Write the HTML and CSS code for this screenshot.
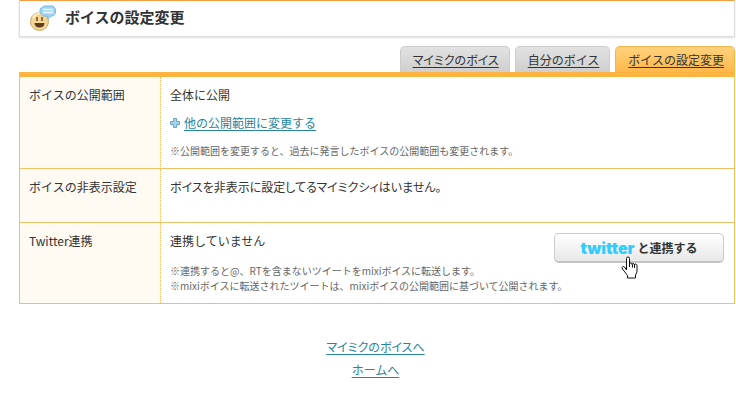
FILE: index.html
```html
<!DOCTYPE html>
<html lang="ja">
<head>
    <meta charset="UTF-8">
    <meta name="viewport" content="width=device-width, initial-scale=1.0">
    <title>ボイスの設定変更</title>
    <link rel="stylesheet" href="styles.css">
</head>
<body>
    <!-- Page heading -->
    <header class="page-header">
        <svg class="voice-icon" width="26" height="27" viewBox="0 0 26 27" aria-hidden="true">
            <circle cx="9.500" cy="16.500" r="9" fill="#f3d594" stroke="#c9a66b"/>
            <path d="M3 13c2-4 5-5 8-5" fill="none" stroke="#fdf0c4" stroke-width="2"/>
            <path d="M7 12v4M12 12v4" stroke="#6b4a26" stroke-width="1.500"/>
            <path d="M4.500 18h10c0 3-2 4.500-5 4.500s-5-1.500-5-4.500z" fill="#5c3d1c"/>
            <path d="M14 1h9l2.500 3v4L23 11h-2l-3 3-1-3h-4L10 8V4z" fill="#9fd4f7" stroke="#7dbce8"/>
            <path d="M13 4.500h10M13 7.500h10" stroke="#eefaff" stroke-width="1.500"/>
        </svg>
        <h1>ボイスの設定変更</h1>
    </header>

    <!-- Tabs -->
    <nav class="tabs">
        <a href="#voice" class="tab kana">マイミクのボイス</a>
        <a href="#mine" class="tab">自分のボイス</a>
        <a href="#settings" class="tab tab-active">ボイスの設定変更</a>
    </nav>

    <!-- Settings -->
    <main>
        <table class="settings">
            <tr>
                <th scope="row">ボイスの公開範囲</th>
                <td>
                    <p>全体に公開</p>
                    <p class="change">
                        <svg width="10" height="10" viewBox="0 0 10 10" aria-hidden="true">
                            <path d="M3.500 .5h3v3h3v3h-3v3h-3v-3h-3v-3h3z" fill="#a5d3ea" stroke="#6ba6c2"/>
                        </svg>
                        <a href="#range">他の公開範囲に変更する</a>
                    </p>
                    <p class="note">※公開範囲を変更すると、過去に発言したボイスの公開範囲も変更されます。</p>
                </td>
            </tr>
            <tr class="row-hidden">
                <th scope="row">ボイスの非表示設定</th>
                <td>
                    <p class="kana">ボイスを非表示に設定してるマイミクシィはいません。</p>
                </td>
            </tr>
            <tr>
                <th scope="row">Twitter連携</th>
                <td>
                    <div class="connect">
                        <p>連携していません</p>
                        <button type="button" class="twitter-btn">
                            <span class="twitter-logo">twitter</span>と連携する
                            <svg class="pointer" width="18" height="23" viewBox="0 0 18 23" aria-hidden="true">
                                <path d="M5.500 14V2.500q0-1.500 1.500-1.500t1.500 1.500V8q0-1 1.200-1t1.300 1.500q0-1 1.200-1t1.300 1.500q0-1 1.200-1t1.300 1.500V15q0 2-1.500 4v3h-8v-2.500L1.500 13q-1-1.500 0-2.200t2 .2z" fill="#fff" stroke="#111"/>
                                <path d="M8.500 8v3M11.500 8.500v3M13.500 9v3" stroke="#111"/>
                            </svg>
                        </button>
                    </div>
                    <p class="note">※連携すると@、RTを含まないツイートをmixiボイスに転送します。<br>※mixiボイスに転送されたツイートは、mixiボイスの公開範囲に基づいて公開されます。</p>
                </td>
            </tr>
        </table>
    </main>

    <!-- Footer links -->
    <footer class="footer-links">
        <a href="#voice" class="kana">マイミクのボイスへ</a>
        <a href="#home">ホームへ</a>
    </footer>
</body>
</html>
```
FILE: styles.css
```css
/* Reset and base styles */
* {
    margin: 0;
    padding: 0;
    box-sizing: border-box;
}

body {
    padding: 0 1px 0 19px;
    background-color: #fff;
    color: #333;
    font-family: "Noto Sans CJK JP", sans-serif;
    font-size: 12px;
    line-height: 18px;
}

a {
    color: #2585a0;
    text-underline-offset: 2px;
}

/* Proportional kana for long kana runs */
.kana {
    font-feature-settings: "palt";
}

/* Page heading */
.page-header {
    display: flex;
    align-items: center;
    gap: 9px;
    height: 37px;
    padding: 0 10px 1px;
    border: 1px solid #ddd;
    border-top: 1px solid #f0a040;
    box-shadow: 0 1px 2px #ddd;
}

.page-header h1 {
    font-size: 15px;
    line-height: 20px;
    padding-bottom: 3px;
}

/* Tabs */
.tabs {
    display: flex;
    justify-content: flex-end;
    gap: 5px;
    margin-top: 9px;
}

.tab {
    height: 26px;
    padding: 4px 10px 0 12px;
    border: 1px solid #ccc;
    border-bottom: 0;
    border-radius: 5px 5px 0 0;
    background: linear-gradient(#e2e2e2, #cfcfcf);
    color: #333;
}

.tab-active {
    border-color: #f3b54a;
    background: linear-gradient(#ffd27c, #ffb84a);
}

/* Settings table */
.settings {
    width: 100%;
    border: 1px solid #f0c068;
    border-top: 5px solid #ffb440;
    border-collapse: separate;
    border-spacing: 0;
    table-layout: fixed;
}

.settings th,
.settings td {
    padding: 9px 10px 10px 9px;
    border-bottom: 1px solid #f0c068;
    text-align: left;
    vertical-align: top;
    font-weight: normal;
}

.settings tr:last-child th,
.settings tr:last-child td {
    border-bottom: 0;
}

.settings th {
    width: 141px;
    border-right: 1px dotted #f0c068;
    background-color: #fffaf2;
}

.row-hidden td {
    padding-bottom: 26px;
}

.change {
    display: flex;
    align-items: center;
    gap: 4px;
    margin-top: 10px;
}

.note {
    margin-top: 11px;
    color: #666;
    font-size: 10px;
    line-height: 15px;
}

/* Twitter connect */
.connect {
    display: flex;
    justify-content: space-between;
    align-items: flex-start;
}

.connect + .note {
    margin-top: 0;
}

.twitter-btn {
    position: relative;
    display: flex;
    align-items: center;
    justify-content: center;
    gap: 3px;
    width: 170px;
    height: 30px;
    margin-top: 1px;
    border: 1px solid #ccc;
    border-bottom: 2px solid #c4c4c4;
    border-radius: 5px;
    background: linear-gradient(#fff, #e8e8e8);
    color: #333;
    font-family: inherit;
    font-size: 12px;
    font-weight: bold;
    cursor: pointer;
}

.twitter-logo {
    color: #33ccff;
    font-family: Inter, sans-serif;
    font-size: 16px;
    font-weight: 900;
}

.pointer {
    position: absolute;
    top: 22px;
    left: 66px;
}

/* Footer links */
.footer-links {
    display: flex;
    flex-direction: column;
    align-items: center;
    gap: 5px;
    padding: 34px 3px 20px 0;
}
```
